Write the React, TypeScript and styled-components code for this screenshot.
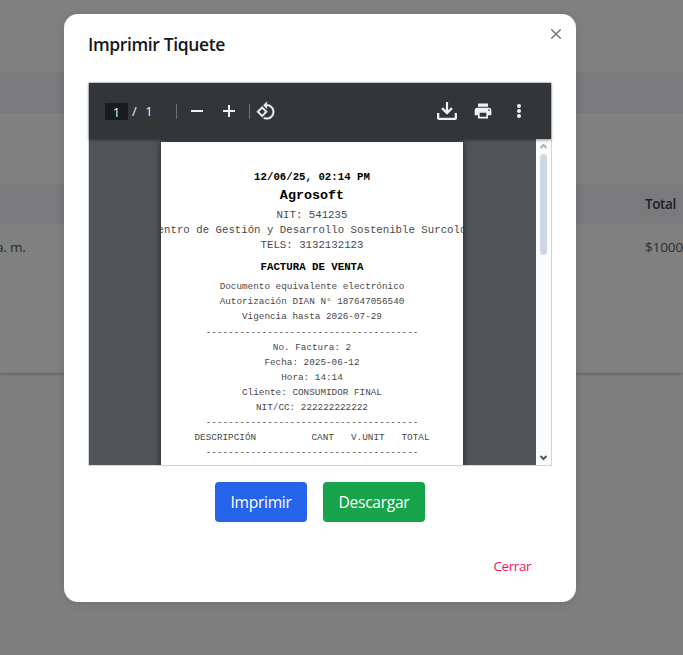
import React from 'react';
import styled, { createGlobalStyle } from 'styled-components';

const GlobalStyle = createGlobalStyle`
  * { box-sizing: border-box; }
  body { margin: 0; overflow: hidden; font-family: "Open Sans", "Noto Sans", sans-serif; }
`;

const Screen = styled.div`
  position: relative;
  width: 683px;
  height: 655px;
  overflow: hidden;
  background: #7f7f7f;
`;

const BackCard = styled.div`
  height: 373px;
  padding-top: 72px;
  background: #808080;
  box-shadow: 0 1px 3px rgba(0, 0, 0, 0.3);
`;

const Band = styled.div<{ $gap?: number }>`
  display: flex;
  align-items: center;
  height: ${(p) => (p.$gap ? 40 : 41)}px;
  margin-top: ${(p) => p.$gap ?? 0}px;
  padding-left: 645px;
  background: #7a7a7d;
  color: #1b1e26;
  font-size: 13.5px;
  font-weight: 600;
  letter-spacing: -0.4px;
`;

const DataRow = styled.div`
  display: flex;
  justify-content: space-between;
  align-items: center;
  height: 46px;
  color: #282d36;
  font-size: 13.5px;
  white-space: nowrap;
`;

const DateCell = styled.span`
  margin-left: -4px;
  letter-spacing: -0.2px;
`;

const TotalCell = styled.span`
  width: 38px;
  letter-spacing: -0.1px;
`;

const Dialog = styled.section`
  position: absolute;
  left: 64px;
  top: 14px;
  width: 512px;
  height: 588px;
  display: flex;
  flex-direction: column;
  padding: 0 24px;
  border-radius: 14px;
  background: #fff;
  box-shadow: 0 2px 10px rgba(0, 0, 0, 0.12);
`;

const Header = styled.header`
  display: flex;
  justify-content: space-between;
  height: 68px;
  padding-top: 16px;
`;

const Title = styled.h1`
  margin: 0;
  color: #11181c;
  font-size: 17.5px;
  line-height: 28px;
  font-weight: 600;
  letter-spacing: -0.37px;
`;

const CloseButton = styled.button`
  width: 16px;
  height: 16px;
  margin: -4px -12px 0 0;
  padding: 0;
  border: 0;
  background: none;
  color: #71717a;
  svg { display: block; }
`;

const Viewer = styled.div`
  display: flex;
  flex-direction: column;
  width: 464px;
  height: 384px;
  border: 1px solid #d1d5db;
  background: #525659;
`;

const Toolbar = styled.div`
  position: relative;
  z-index: 1;
  display: flex;
  align-items: center;
  flex: 0 0 56px;
  padding: 0 22px 0 16px;
  background: #323639;
  color: #f1f1f1;
  box-shadow: 0 1px 3px rgba(0, 0, 0, 0.45);
`;

const PageInput = styled.span`
  width: 23px;
  height: 17px;
  background: #191b1c;
  text-align: center;
  font-size: 13px;
  line-height: 18px;
`;

const PageTotal = styled.span`
  width: 48px;
  padding-left: 4px;
  font-size: 13px;
  line-height: 18px;
  word-spacing: 5px;
`;

const Separator = styled.i<{ $left?: number }>`
  width: 1px;
  height: 15px;
  margin-left: ${(p) => p.$left ?? 0}px;
  background: #6b6e70;
`;

const Icon = styled.svg<{ $left: number }>`
  display: block;
  flex: none;
  margin-left: ${(p) => p.$left}px;
  fill: currentColor;
`;

const Actions = styled.div`
  display: flex;
  margin-left: auto;
`;

const Body = styled.div`
  display: flex;
  flex: 1;
  min-height: 0;
`;

const Canvas = styled.div`
  display: flex;
  justify-content: center;
  flex: 1;
  padding: 3px 1px 0 0;
  overflow: hidden;
`;

const Paper = styled.article`
  display: flex;
  flex-direction: column;
  align-items: center;
  width: 302px;
  height: 500px;
  padding-top: 28px;
  overflow: hidden;
  background: #fff;
  box-shadow: 0 0 7px rgba(0, 0, 0, 0.65);
  font-family: "Liberation Mono", "Courier New", monospace;
`;

const Line = styled.div<{ $size?: number; $strong?: boolean; $before?: number }>`
  flex: none;
  height: 15px;
  margin-top: ${(p) => p.$before ?? 0}px;
  color: ${(p) => (p.$strong ? '#000' : '#484848')};
  font-size: ${(p) => p.$size ?? 9.34}px;
  line-height: 15px;
  font-weight: ${(p) => (p.$strong ? 700 : 400)};
  white-space: pre;
`;

const Columns = styled(Line)`
  display: grid;
  grid-template-columns: 117px 39.5px 50.5px 28px;
`;

const ScrollTrack = styled.div`
  display: flex;
  flex-direction: column;
  align-items: center;
  width: 15px;
  background: #fcfcfc;
`;

const Thumb = styled.div`
  width: 7px;
  height: 101px;
  border-radius: 4px;
  background: #cdd8e4;
`;

const Arrow = styled.svg<{ $end?: boolean }>`
  width: 15px;
  height: 15px;
  margin-top: ${(p) => (p.$end ? 'auto' : 0)};
  fill: none;
  stroke: ${(p) => (p.$end ? '#555' : '#b0b0b0')};
  stroke-width: 2;
`;

const ButtonRow = styled.div`
  display: flex;
  justify-content: center;
  gap: 16px;
  margin-top: 16px;
`;

const Button = styled.button<{ $tone: string; $width: number }>`
  width: ${(p) => p.$width}px;
  height: 40px;
  padding: 0;
  border: 0;
  border-radius: 4px;
  background: ${(p) => p.$tone};
  color: #fff;
  font: 400 15.6px "Open Sans", sans-serif;
  letter-spacing: -0.3px;
`;

const Footer = styled.footer`
  display: flex;
  justify-content: flex-end;
  margin-top: 34px;
  padding-right: 21px;
`;

const TextButton = styled.button`
  padding: 0;
  border: 0;
  background: none;
  color: #f31260;
  font: 400 13.5px/20px "Open Sans", sans-serif;
  letter-spacing: -0.45px;
`;

const dashes = '-'.repeat(38);

export default function App() {
  return (
    <>
      <GlobalStyle />
      <Screen>
        <BackCard>
          <Band />
          <Band $gap={71}>Total</Band>
          <DataRow><DateCell>a. m.</DateCell><TotalCell>$1000</TotalCell></DataRow>
        </BackCard>
        <Dialog>
          <Header>
            <Title>Imprimir Tiquete</Title>
            <CloseButton aria-label="Cerrar">
              <svg width="16" height="16" viewBox="0 0 16 16" fill="none" stroke="currentColor" strokeWidth="1.4" strokeLinecap="round">
                <path d="M3.7 3.7l8.6 8.6M12.3 3.7l-8.6 8.6" />
              </svg>
            </CloseButton>
          </Header>
          <Viewer>
            <Toolbar>
              <PageInput>1</PageInput>
              <PageTotal>/ 1</PageTotal>
              <Separator />
              <Icon $left={10} width="20" height="20" viewBox="0 0 20 20"><path d="M4 9h12v2H4z" /></Icon>
              <Icon $left={12} width="20" height="20" viewBox="0 0 20 20"><path d="M9 4h2v5h5v2h-5v5H9v-5H4V9h5z" /></Icon>
              <Separator $left={10} />
              <Icon $left={6} width="20" height="20" viewBox="0 0 24 24" stroke="currentColor" strokeWidth="0.4"><path d="M7.34 6.41L.86 12.9l6.49 6.48 6.49-6.48-6.5-6.49zM3.69 12.9l3.66-3.66L11 12.9l-3.66 3.66-3.65-3.66zm15.67-6.26A8.95 8.95 0 0 0 13 4V.76L8.76 5 13 9.24V6c1.79 0 3.58.68 4.95 2.05a7.007 7.007 0 0 1 0 9.9 6.973 6.973 0 0 1-7.79 1.44l-1.49 1.49C10.02 21.62 11.51 22 13 22c2.3 0 4.61-.88 6.36-2.64a8.98 8.98 0 0 0 0-12.72z" /></Icon>
              <Actions>
                <Icon $left={0} width="22" height="20" viewBox="0 0 22 20"><path d="M9.9 1h2.2v8.2l3-3 1.7 1.7L11 13.7 5.2 7.9l1.7-1.7 3 3zM1 12h2.3v4.7h15.4V12H21v5a2 2 0 0 1-2 2H3a2 2 0 0 1-2-2z" /></Icon>
                <Icon $left={15} width="20" height="20" viewBox="0 0 24 24"><path d="M19 8H5c-1.66 0-3 1.34-3 3v6h4v4h12v-4h4v-6c0-1.66-1.34-3-3-3zm-3 11H8v-5h8v5zm3-7c-.55 0-1-.45-1-1s.45-1 1-1 1 .45 1 1-.45 1-1 1zm-1-9H6v4h12V3z" /></Icon>
                <Icon $left={16} width="20" height="20" viewBox="0 0 20 20"><circle cx="10" cy="5" r="2" /><circle cx="10" cy="10" r="2" /><circle cx="10" cy="15" r="2" /></Icon>
              </Actions>
            </Toolbar>
            <Body>
              <Canvas>
                <Paper>
                  <Line $size={10.72} $strong>12/06/25, 02:14 PM</Line>
                  <Line $size={13.4} $strong $before={3}>Agrosoft</Line>
                  <Line $size={10.72} $before={5}>NIT: 541235</Line>
                  <Line $size={10.72}>Centro de Gestión y Desarrollo Sostenible Surcolom</Line>
                  <Line $size={10.72}>TELS: 3132132123</Line>
                  <Line $size={10.72} $strong $before={7}>FACTURA DE VENTA</Line>
                  <Line $before={4}>Documento equivalente electrónico</Line>
                  <Line>Autorización DIAN N° 187647056540</Line>
                  <Line>Vigencia hasta 2026-07-29</Line>
                  <Line $before={1}>{dashes}</Line>
                  <Line>No. Factura: 2</Line>
                  <Line>Fecha: 2025-06-12</Line>
                  <Line>Hora: 14:14</Line>
                  <Line>Cliente: CONSUMIDOR FINAL</Line>
                  <Line>NIT/CC: 222222222222</Line>
                  <Line>{dashes}</Line>
                  <Columns><span>DESCRIPCIÓN</span><span>CANT</span><span>V.UNIT</span><span>TOTAL</span></Columns>
                  <Line>{dashes}</Line>
                </Paper>
              </Canvas>
              <ScrollTrack>
                <Arrow viewBox="0 0 15 15"><path d="M4.5 9L7.5 6l3 3" /></Arrow>
                <Thumb />
                <Arrow $end viewBox="0 0 15 15"><path d="M4.5 6l3 3 3-3" /></Arrow>
              </ScrollTrack>
            </Body>
          </Viewer>
          <ButtonRow>
            <Button $tone="#2563eb" $width={92}>Imprimir</Button>
            <Button $tone="#16a34a" $width={102}>Descargar</Button>
          </ButtonRow>
          <Footer><TextButton>Cerrar</TextButton></Footer>
        </Dialog>
      </Screen>
    </>
  );
}
